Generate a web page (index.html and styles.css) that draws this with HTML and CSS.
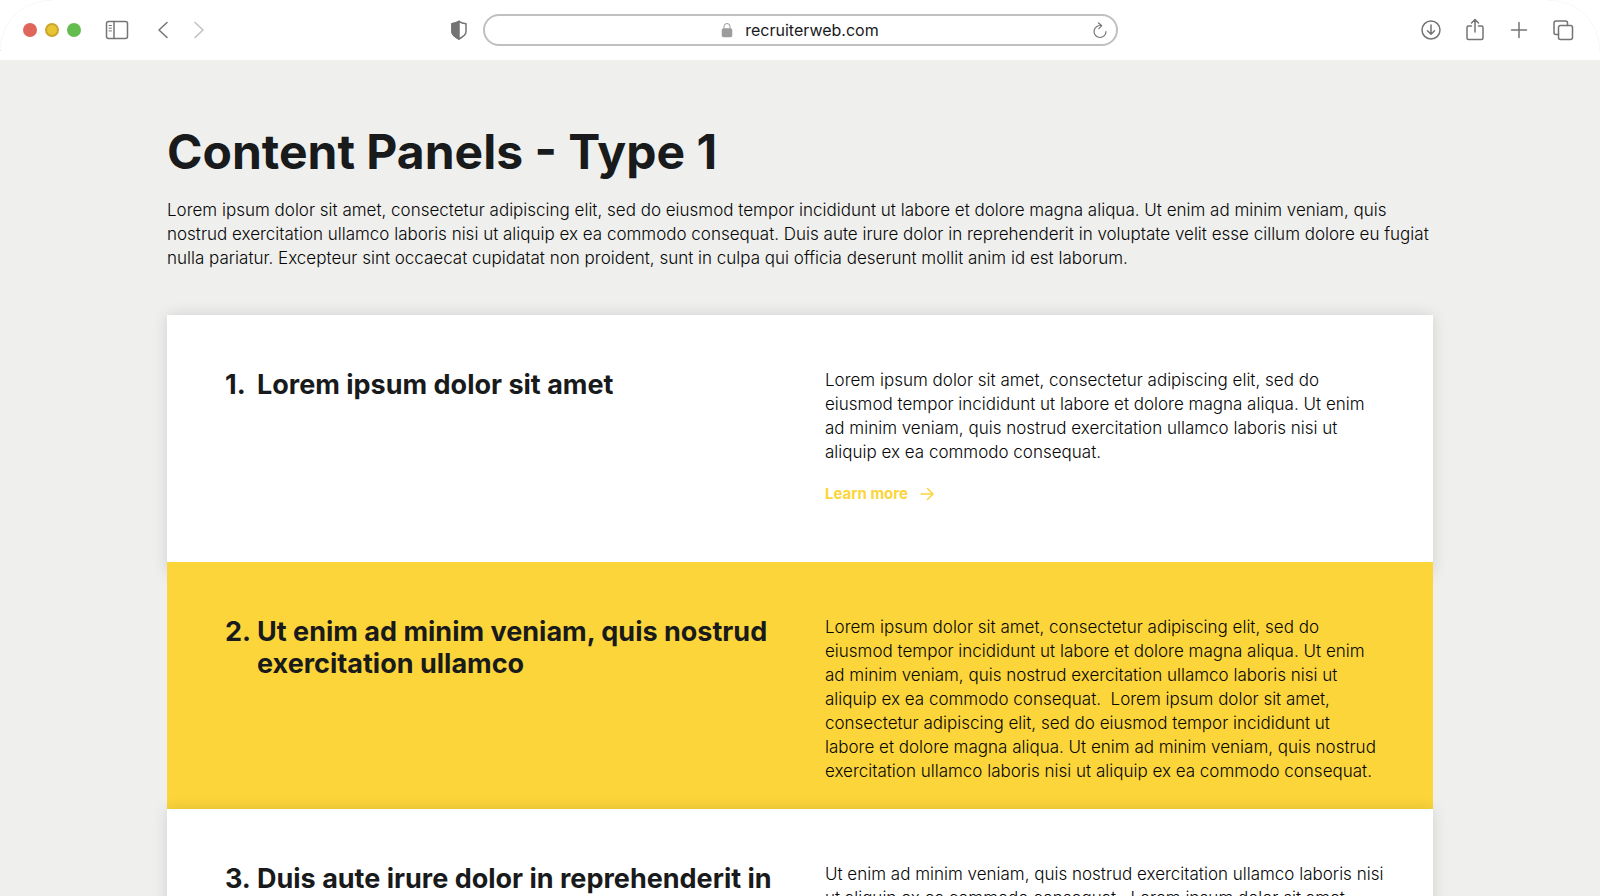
FILE: index.html
```
<!DOCTYPE html>
<html lang="en">
<head>
    <meta charset="UTF-8">
    <meta name="viewport" content="width=device-width, initial-scale=1.0">
    <title>Content Panels</title>
    <link rel="stylesheet" href="styles.css">
</head>
<body>
    <header class="toolbar">
        <div class="tools">
            <div class="dots">
                <button class="dot close" aria-label="Close"></button>
                <button class="dot minimise" aria-label="Minimise"></button>
                <button class="dot maximise" aria-label="Maximise"></button>
            </div>
            <button class="icon sidebar" aria-label="Sidebar">
                <svg width="24" height="20" viewBox="0 0 24 20">
                    <rect x="1.500" y="1.500" width="21" height="17" rx="2"/>
                    <path d="M9 1.500v17"/>
                    <path class="thin" d="M4 5.500h2.500M4 8.200h2.500M4 10.900h2.500"/>
                </svg>
            </button>
            <button class="icon back" aria-label="Back">
                <svg width="12" height="18" viewBox="0 0 12 18"><path d="M10 1.500L2 9l8 7.500"/></svg>
            </button>
            <button class="icon forward" aria-label="Forward">
                <svg width="12" height="18" viewBox="0 0 12 18"><path d="M2 1.500L10 9l-8 7.500"/></svg>
            </button>
            <button class="icon shield" aria-label="Privacy">
                <svg width="18" height="20" viewBox="0 0 18 20">
                    <path d="M9 1.300c2 1.500 4 2.200 7 2.400v8c0 3.200-3 5.100-7 7.300-4-2.200-7-4.100-7-7.300v-8c3-.2 5-.9 7-2.400z"/>
                    <path class="solid" d="M9 1.300V19c-4-2.200-7-4.100-7-7.300v-8c3-.2 5-.9 7-2.400z"/>
                </svg>
            </button>
        </div>

        <div class="address">
            <svg class="lock" width="12" height="16" viewBox="0 0 12 16">
                <rect x="1.500" y="7" width="9" height="7.500" rx="1"/>
                <path d="M3 7V4.500a3 3 0 0 1 6 0V7"/>
            </svg>
            <span>recruiterweb.com</span>
            <button class="icon reload" aria-label="Reload">
                <svg width="16" height="18" viewBox="0 0 16 18">
                    <path d="M9.500 4.700A6 6 0 1 0 14 10.500M6.500 2l3.300 2.700-3 3"/>
                </svg>
            </button>
        </div>

        <div class="tools actions">
            <button class="icon" aria-label="Downloads">
                <svg width="22" height="22" viewBox="0 0 22 22"><circle cx="11" cy="11" r="9"/><path d="M11 6v9M7.500 11.800L11 15.200l3.500-3.400"/></svg>
            </button>
            <button class="icon" aria-label="Share">
                <svg width="22" height="24" viewBox="0 0 22 24"><path d="M7.500 8h-3A1.500 1.500 0 0 0 3 9.500v10.500a1.500 1.500 0 0 0 1.500 1.500h13a1.500 1.500 0 0 0 1.500-1.500V9.500A1.500 1.500 0 0 0 17.500 8h-3M11 14V1.500M7.500 5L11 1.500 14.500 5"/></svg>
            </button>
            <button class="icon" aria-label="New tab">
                <svg width="22" height="22" viewBox="0 0 22 22"><path d="M11 3.500v15M3.500 11h15"/></svg>
            </button>
            <button class="icon" aria-label="Show tabs">
                <svg width="22" height="22" viewBox="0 0 22 22"><rect x="6.500" y="6.500" width="14" height="14" rx="2"/><path d="M6.500 15.500H4A2 2 0 0 1 2 13.500V4a2 2 0 0 1 2-2h9.500a2 2 0 0 1 2 2v2.500"/></svg>
            </button>
        </div>
    </header>

    <main class="container">
        <h1>Content Panels - Type 1</h1>
        <p class="intro">Lorem ipsum dolor sit amet, consectetur adipiscing elit, sed do eiusmod tempor incididunt ut labore et dolore magna aliqua. Ut enim ad minim veniam, quis nostrud exercitation ullamco laboris nisi ut aliquip ex ea commodo consequat. Duis aute irure dolor in reprehenderit in voluptate velit esse cillum dolore eu fugiat nulla pariatur. Excepteur sint occaecat cupidatat non proident, sunt in culpa qui officia deserunt mollit anim id est laborum.</p>

        <section class="panel">
            <h2><span class="number">1.</span><span>Lorem ipsum dolor sit amet</span></h2>
            <div class="text">
                <p>Lorem ipsum dolor sit amet, consectetur adipiscing elit, sed do eiusmod tempor incididunt ut labore et dolore magna aliqua. Ut enim ad minim veniam, quis nostrud exercitation ullamco laboris nisi ut aliquip ex ea commodo consequat.</p>
                <a class="more" href="#">Learn more
                    <svg width="14" height="14" viewBox="0 0 14 14"><path d="M1 7h12M7.500 1.500L13 7l-5.500 5.500"/></svg>
                </a>
            </div>
        </section>

        <section class="panel highlight">
            <h2><span class="number">2.</span><span>Ut enim ad minim veniam, quis nostrud exercitation ullamco</span></h2>
            <div class="text">
                <p>Lorem ipsum dolor sit amet, consectetur adipiscing elit, sed do eiusmod tempor incididunt ut labore et dolore magna aliqua. Ut enim ad minim veniam, quis nostrud exercitation ullamco laboris nisi ut aliquip ex ea commodo consequat.&nbsp; Lorem ipsum dolor sit amet, consectetur adipiscing elit, sed do eiusmod tempor incididunt ut labore&nbsp;et dolore magna aliqua. Ut enim ad minim veniam, quis nostrud exercitation ullamco laboris nisi ut aliquip ex ea commodo consequat.</p>
            </div>
        </section>

        <section class="panel">
            <h2><span class="number">3.</span><span>Duis aute irure dolor in reprehenderit in</span></h2>
            <div class="text">
                <p>Ut enim ad minim veniam, quis nostrud exercitation ullamco laboris nisi ut aliquip ex ea commodo consequat.&nbsp; Lorem ipsum dolor sit amet,</p>
            </div>
        </section>
    </main>
</body>
</html>
```
FILE: styles.css
```
* {
    margin: 0;
    padding: 0;
    box-sizing: border-box;
}

body {
    height: 100vh;
    overflow: hidden;
    background: #efefed;
    color: #181a1b;
    font-family: Inter, sans-serif;
    font-size: 17px;
    font-weight: 300;
    line-height: 24px;
}

button {
    border: none;
    background: none;
    cursor: pointer;
}

svg {
    display: block;
    fill: none;
    stroke: currentColor;
    stroke-width: 1.5;
    stroke-linecap: round;
    stroke-linejoin: round;
}

/* Browser bar */
.toolbar {
    position: relative;
    display: grid;
    grid-template-columns: 1fr minmax(0, 635px) 1fr;
    align-items: center;
    height: 60px;
    background: #fff;
}

/* faint rounded window corners */
.toolbar::before,
.toolbar::after {
    content: "";
    position: absolute;
    top: 0;
    width: 50px;
    height: 50px;
    border-top: 1px dotted #eee;
    pointer-events: none;
}

.toolbar::before {
    left: 0;
    border-left: 1px dotted #eee;
    border-top-left-radius: 50px;
}

.toolbar::after {
    right: 0;
    border-right: 1px dotted #eee;
    border-top-right-radius: 50px;
}

.tools {
    display: flex;
    align-items: center;
    padding: 0 15px 0 23px;
}

.dots {
    display: flex;
    gap: 8px;
}

.dot {
    width: 14px;
    height: 14px;
    border-radius: 50%;
}

.close {
    background: #e0655a;
}

.minimise {
    background: #e8c535;
    border: 2px solid #cda52c;
}

.maximise {
    background: #62bd4e;
}

.icon {
    color: #747474;
}

.sidebar {
    margin-left: 24px;
}

.thin {
    stroke-width: 1;
}

.back {
    margin-left: 28px;
}

.forward {
    margin-left: 24px;
    color: #c0c0c0;
}

.shield {
    margin-left: auto;
}

.solid {
    fill: currentColor;
}

.address {
    position: relative;
    display: flex;
    justify-content: center;
    align-items: center;
    gap: 12px;
    height: 32px;
    border: 2px solid #c0c0c0;
    border-radius: 16px;
    font-size: 16px;
    font-weight: 400;
}

.lock {
    color: #9c9c9c;
}

.lock rect {
    fill: currentColor;
}

.lock path {
    stroke-width: 1;
}

.reload {
    position: absolute;
    right: 8px;
}

.reload svg {
    stroke-width: 1.2;
}

.actions {
    justify-content: flex-end;
    gap: 22px;
    padding: 0 26px 0 0;
}

/* Page */
.container {
    width: 79.125%;
    margin: 0 auto;
    padding-top: 63px;
}

h1 {
    margin-bottom: 17px;
    font-size: 48px;
    line-height: 58px;
    font-weight: 700;
}

p {
    color: #050606;
}

.intro {
    margin-bottom: 45px;
}

.panel {
    display: grid;
    grid-template-columns: 1fr 1fr;
    gap: 39px;
    min-height: 247px;
    padding: 53px 47px 26px 58px;
    background: #fff;
    box-shadow: 0 0 14px rgba(0, 0, 0, 0.13);
}

.panel:first-of-type {
    min-height: 259px;
}

/* sits over the bottom edge of the panel above */
.highlight {
    position: relative;
    margin-top: -12px;
    background: #fcd53a;
    box-shadow: none;
}

.highlight + .panel {
    position: relative;
}

h2 {
    display: flex;
    padding-top: 1px;
    font-size: 27px;
    line-height: 32px;
    font-weight: 700;
}

.number {
    flex: none;
    width: 32px;
}

.more {
    display: inline-flex;
    align-items: center;
    gap: 12px;
    margin-top: 18px;
    color: #fcd53a;
    font-size: 15px;
    font-weight: 700;
    text-decoration: none;
}
```
